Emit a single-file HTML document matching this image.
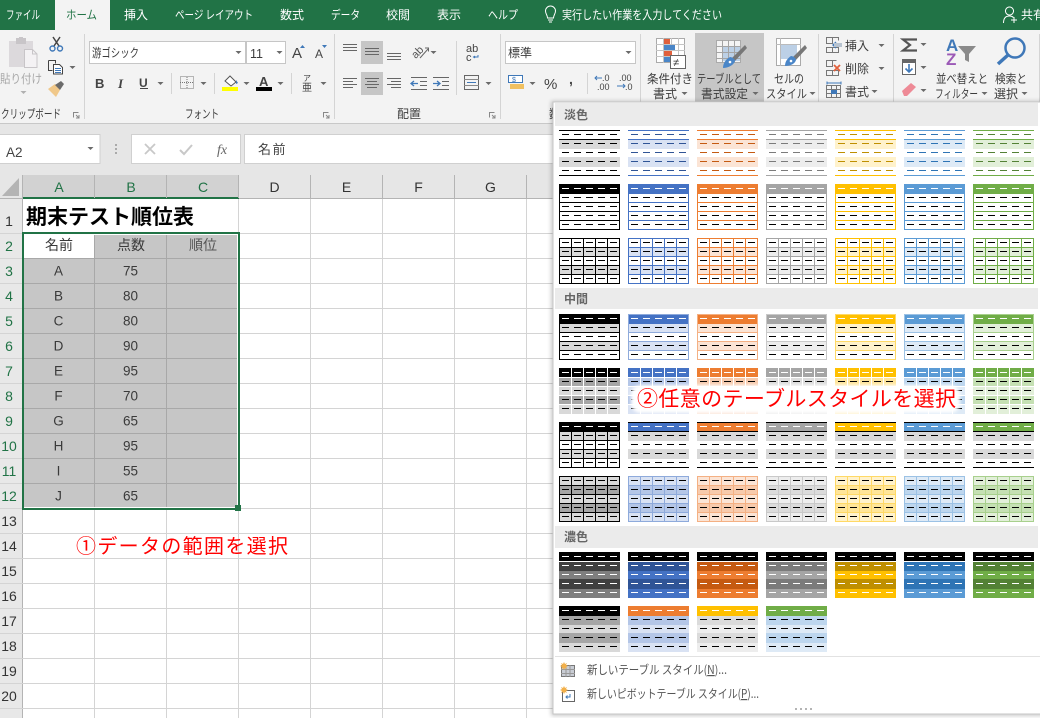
<!DOCTYPE html>
<html lang="ja"><head><meta charset="utf-8"><title>Excel</title>
<style>
html,body{margin:0;padding:0;background:#fff;width:1040px;height:718px;overflow:hidden}
svg{display:block;font-family:"Liberation Sans","Noto Sans CJK JP",sans-serif}
.j{font-family:"Noto Sans CJK JP","Liberation Sans",sans-serif}
.rb{font-size:12px;fill:#3c3c3c}
.tab{font-size:12px;fill:#fff}
.cell{font-size:13.500px;fill:#3a3a3a;text-anchor:middle;font-family:"Liberation Sans",sans-serif}
.cj{font-size:14px;fill:#3a3a3a;text-anchor:middle}
.hd{font-size:14px;text-anchor:middle;fill:#333}
.g{fill:#217346}
.sec{font-size:12px;font-weight:bold;fill:#666}
.crisp rect,.crisp path,.crisp use{shape-rendering:crispEdges}
.fa{fill:var(--a)}.ft{fill:var(--t)}.f2{fill:var(--t2)}.fd{fill:var(--d)}
.sa{fill:none;stroke:var(--a)}.sbb{fill:none;stroke:var(--b)}
.sw{stroke:#fff;fill:none}.sb{stroke:#000;fill:none}.sd{stroke:var(--d);fill:none}
.k{--a:#000;--t:#d9d9d9;--t2:#a6a6a6;--d:#000;--b:#000;--dk:#404040}
.c1{--a:#4472c4;--t:#d9e2f3;--t2:#b4c6e7;--d:#2f5496;--b:#8eaadb}
.c2{--a:#ed7d31;--t:#fbe4d5;--t2:#f7caac;--d:#c55a11;--b:#f4b083}
.c3{--a:#a5a5a5;--t:#ededed;--t2:#dbdbdb;--d:#7b7b7b;--b:#c9c9c9}
.c4{--a:#ffc000;--t:#fff2cc;--t2:#ffe599;--d:#bf8f00;--b:#ffd966}
.c5{--a:#5b9bd5;--t:#deeaf6;--t2:#bdd6ee;--d:#2e74b5;--b:#9cc2e5}
.c6{--a:#70ad47;--t:#e2efd9;--t2:#c5e0b3;--d:#538135;--b:#a8d08d}
.ic{fill:none;stroke:#666;stroke-width:1}
</style></head><body>
<svg width="1040" height="718" viewBox="0 0 1040 718" xmlns="http://www.w3.org/2000/svg">
<defs>
<path id="d0" d="M3 4.500h7m5 0h7m5 0h7m5 0h7m5 0h7"/>
<path id="dr" d="M3 13.500h7m5 0h7m5 0h7m5 0h7m5 0h7M3 22.500h7m5 0h7m5 0h7m5 0h7m5 0h7M3 31.500h7m5 0h7m5 0h7m5 0h7m5 0h7M3 40.500h7m5 0h7m5 0h7m5 0h7m5 0h7"/>
<path id="hl" d="M0 9.500h61M0 18.500h61M0 27.500h61M0 36.500h61"/>
<path id="vl" d="M12.500 0v46M24.500 0v46M36.500 0v46M48.500 0v46"/>
<path id="cr" d="M.5 0h6l-3 3z" fill="#6a6a6a"/>
<g id="l1"><rect width="61" height="1" class="fa"/><rect y="10" width="61" height="9" class="ft"/><rect y="27" width="61" height="10" class="ft"/><rect y="9" width="61" height="1" class="fa"/><rect y="45" width="61" height="1" class="fa"/><use href="#d0" class="sd"/><use href="#dr" class="sd"/></g>
<g id="l2"><rect width="61" height="10" class="fa"/><rect x=".5" y=".5" width="60" height="45" class="sa"/><path d="M0 18.500h61M0 27.500h61M0 36.500h61" class="sa"/><use href="#d0" class="sw"/><use href="#dr" class="sb"/></g>
<g id="l3"><rect y="9" width="61" height="9" class="ft"/><rect y="27" width="61" height="9" class="ft"/><use href="#hl" class="sa"/><use href="#vl" class="sa"/><rect x=".5" y=".5" width="60" height="45" class="sa"/><use href="#d0" class="sb"/><use href="#dr" class="sb"/></g>
<g id="m1"><rect y="10" width="61" height="9" class="ft"/><rect y="28" width="61" height="9" class="ft"/><rect width="61" height="10" class="fa"/><rect x=".5" y=".5" width="60" height="45" class="sbb"/><path d="M0 18.500h61M0 27.500h61M0 36.500h61" class="sbb"/><use href="#d0" class="sw"/><use href="#dr" class="sb"/></g>
<g id="m2"><rect width="61" height="9" class="fa"/><rect y="10" width="61" height="8" class="f2"/><rect y="19" width="61" height="8" class="ft"/><rect y="28" width="61" height="8" class="f2"/><rect y="37" width="61" height="9" class="ft"/><path d="M12.500 0v46M24.500 0v46M36.500 0v46M48.500 0v46" stroke="#fff" fill="none"/><use href="#d0" class="sw"/><use href="#dr" class="sb"/></g>
<g id="m3k"><rect y="10" width="61" height="9" class="ft"/><rect y="28" width="61" height="9" class="ft"/><path d="M12.500 10v36M24.500 10v36M36.500 10v36M48.500 10v36M0 18.500h61M0 27.500h61M0 36.500h61" stroke="#000" fill="none"/><rect width="61" height="10" fill="#000"/><rect x=".5" y=".5" width="60" height="45" stroke="#000" fill="none"/><use href="#d0" class="sw"/><use href="#dr" class="sb"/></g>
<g id="m3"><rect y="1" width="61" height="8" class="fa"/><rect width="61" height="1" fill="#000"/><rect y="9" width="61" height="1" fill="#000"/><rect y="10" width="61" height="9" fill="#d9d9d9"/><rect y="27" width="61" height="10" fill="#d9d9d9"/><rect y="45" width="61" height="1" fill="#000"/><use href="#d0" class="sw"/><use href="#dr" class="sb"/></g>
<g id="m4"><rect width="61" height="46" class="ft"/><rect y="9" width="61" height="9" class="f2"/><rect y="27" width="61" height="9" class="f2"/><use href="#hl" class="sbb"/><use href="#vl" class="sbb"/><rect x=".5" y=".5" width="60" height="45" class="sbb"/><use href="#d0" class="sb"/><use href="#dr" class="sb"/></g>
<g id="d1"><rect width="61" height="9" fill="#000"/><rect y="10" width="61" height="9" class="fd"/><rect y="19" width="61" height="8" class="fa"/><rect y="27" width="61" height="10" class="fd"/><rect y="37" width="61" height="9" class="fa"/><use href="#d0" class="sw"/><use href="#dr" class="sw"/></g>
<g id="d2"><rect width="61" height="10" class="fa"/><rect y="10" width="61" height="9" class="f2"/><rect y="19" width="61" height="8" class="ft"/><rect y="27" width="61" height="10" class="f2"/><rect y="37" width="61" height="9" class="ft"/><use href="#d0" class="sw"/><use href="#dr" class="sb"/></g>
<filter id="bl" x="-5%" y="-30%" width="110%" height="160%"><feGaussianBlur stdDeviation="1.600"/></filter>
<filter id="sh" x="-3%" y="-3%" width="106%" height="106%"><feGaussianBlur stdDeviation="2"/></filter>
</defs>

<!-- title bar -->
<g class="crisp"><rect width="1040" height="30" fill="#217346"/><rect x="55" width="55" height="30" fill="#f3f3f3"/><rect y="30" width="1040" height="93" fill="#f3f3f3"/><rect y="123" width="1040" height="1" fill="#c8c8c8"/><rect y="124" width="1040" height="51" fill="#e6e6e6"/></g>
<g class="j">
<text class="tab" x="6" y="19" textLength="34" lengthAdjust="spacingAndGlyphs">ファイル</text>
<text class="tab" x="66" y="19" textLength="31" lengthAdjust="spacingAndGlyphs" style="fill:#217346">ホーム</text>
<text class="tab" x="124" y="19" textLength="24" lengthAdjust="spacingAndGlyphs">挿入</text>
<text class="tab" x="175" y="19" textLength="78" lengthAdjust="spacingAndGlyphs">ページ レイアウト</text>
<text class="tab" x="280" y="19" textLength="24" lengthAdjust="spacingAndGlyphs">数式</text>
<text class="tab" x="331" y="19" textLength="29" lengthAdjust="spacingAndGlyphs">データ</text>
<text class="tab" x="386" y="19" textLength="24" lengthAdjust="spacingAndGlyphs">校閲</text>
<text class="tab" x="437" y="19" textLength="24" lengthAdjust="spacingAndGlyphs">表示</text>
<text class="tab" x="488" y="19" textLength="30" lengthAdjust="spacingAndGlyphs">ヘルプ</text>
<text class="tab" x="562" y="19" textLength="160" lengthAdjust="spacingAndGlyphs">実行したい作業を入力してください</text>
<text class="tab" x="1021" y="19">共有</text>
</g>
<path d="M547.500 18c0-3-2-4-2-7a5 5 0 0 1 10 0c0 3-2 4-2 7zM548 20h5M549 22h3" fill="none" stroke="#fff"/>
<path d="M1009.500 7a4 4 0 1 1-.01 0zM1003.500 23c0-5 2-7 6-7 2 0 3 .5 4 1.500M1011 20h6M1014 17v6" fill="none" stroke="#fff"/>

<!-- clipboard -->
<g class="crisp">
<rect x="9" y="41" width="24" height="26" fill="#dcd9dc"/><rect x="16" y="38" width="10" height="6" fill="#c8c5c8"/><rect x="19" y="37" width="4" height="2" fill="#c8c5c8"/>
</g>
<path d="M24.500 49.500h8l4.500 4.500v13.500h-12.500z" fill="#f4f2f4" stroke="#c8c5c8"/><path d="M32.500 49.500v4.500h4.500" fill="none" stroke="#c8c5c8"/>
<g class="j"><text class="rb" x="0" y="83" textLength="42" lengthAdjust="spacingAndGlyphs" style="fill:#a8a8a8">貼り付け</text></g>
<path d="M20.500 91h6l-3 3z" fill="#b0b0b0"/>
<path d="M53 37l6 9M60 37l-6 9" stroke="#444" stroke-width="1.500" fill="none"/>
<circle cx="52.500" cy="48.500" r="2.500" fill="none" stroke="#3f78b8" stroke-width="1.400"/><circle cx="60" cy="48.500" r="2.500" fill="none" stroke="#3f78b8" stroke-width="1.400"/>
<path d="M48.500 60.500h7v3M48.500 60.500v10h4" fill="none" stroke="#444"/><path d="M53.500 64.500h6l3 3v6.500h-9z" fill="#fff" stroke="#444"/><path d="M55 68.500h6M55 70.500h6M55 72.500h6" stroke="#3f78b8"/>
<use href="#cr" x="69" y="66"/>
<path d="M48 89l7-5 5 6-4 7z" fill="#f0c88a"/><path d="M55 85l6-4 3 3-4 6z" fill="#6b6b6b"/>
<g class="j"><text class="rb" x="1" y="118" textLength="60" lengthAdjust="spacingAndGlyphs">クリップボード</text></g>
<path d="M73.500 117.500v-5h5M76 115l3 3M79 115v3h-3" fill="none" stroke="#888"/>
<g class="crisp"><rect x="84" y="34" width="1" height="85" fill="#d4d4d4"/></g>

<!-- font -->
<g class="crisp"><rect x="89.500" y="41.500" width="156" height="22" fill="#fff" stroke="#c6c6c6"/><rect x="246.500" y="41.500" width="39" height="22" fill="#fff" stroke="#c6c6c6"/></g>
<g class="j"><text class="rb" x="92" y="57" textLength="47" lengthAdjust="spacingAndGlyphs">游ゴシック</text></g>
<text class="rb" x="250" y="58" style="font-size:12.500px">11</text>
<use href="#cr" x="235" y="51"/><use href="#cr" x="276" y="51"/>
<text x="292" y="58" style="font-size:15px;fill:#444">A</text><path d="M300 48l2.500-3 2.500 3z" fill="#3f78b8"/>
<text x="315" y="58" style="font-size:12px;fill:#444">A</text><path d="M322 45h5l-2.500 3z" fill="#3f78b8"/>
<text x="95" y="88" style="font-size:13px;font-weight:bold;fill:#444">B</text>
<text x="118" y="88" style="font-size:13px;font-style:italic;font-weight:bold;font-family:'Liberation Serif',serif;fill:#444">I</text>
<text x="139" y="87" style="font-size:12px;font-weight:bold;fill:#444">U</text><rect x="140" y="88" width="8" height="1" fill="#444"/>
<use href="#cr" x="157" y="82"/>
<g class="crisp"><rect x="171" y="73" width="1" height="21" fill="#d4d4d4"/></g>
<rect x="180.500" y="76.500" width="13" height="12" fill="none" stroke="#777" stroke-dasharray="1 1"/><path d="M187 77v12M180 82.500h14" stroke="#777" stroke-dasharray="1 1"/>
<use href="#cr" x="200" y="82"/>
<g class="crisp"><rect x="214" y="73" width="1" height="21" fill="#d4d4d4"/></g>
<path d="M225 81l5-5 6 6-5 4z" fill="#fff" stroke="#555"/><path d="M236 80l2 3-2 1z" fill="#3f78b8"/>
<g class="crisp"><rect x="222" y="87" width="16" height="4" fill="#ff0"/></g>
<use href="#cr" x="243" y="82"/>
<text x="259" y="86" style="font-size:13px;font-weight:bold;fill:#444">A</text>
<g class="crisp"><rect x="256" y="87" width="16" height="4" fill="#000"/></g>
<use href="#cr" x="277" y="82"/>
<g class="crisp"><rect x="291" y="73" width="1" height="21" fill="#d4d4d4"/></g>
<g class="j"><text x="303" y="81" style="font-size:8px;fill:#444">ア</text><text x="302" y="91" style="font-size:10px;fill:#444">亜</text></g>
<use href="#cr" x="320" y="82"/>
<g class="j"><text class="rb" x="185" y="118" textLength="34" lengthAdjust="spacingAndGlyphs">フォント</text></g>
<path d="M323.500 117.500v-5h5M326 115l3 3M329 115v3h-3" fill="none" stroke="#888"/>
<g class="crisp"><rect x="334" y="34" width="1" height="85" fill="#d4d4d4"/></g>

<!-- alignment -->
<g class="crisp"><rect x="361" y="41" width="22" height="23" fill="#c6c6c6"/><rect x="361" y="72" width="22" height="23" fill="#c6c6c6"/></g>
<g class="ic" style="shape-rendering:crispEdges">
<path d="M343 44.500h14M343 47.500h14M343 50.500h14"/><path d="M365 48.500h14M365 51.500h14M365 54.500h14"/><path d="M387 53.500h14M387 56.500h14M387 59.500h14"/>
<path d="M343 78.500h14M343 81.500h10M343 84.500h14M343 87.500h10"/><path d="M365 78.500h14M367 81.500h10M365 84.500h14M367 87.500h10"/><path d="M387 78.500h14M391 81.500h10M387 84.500h14M391 87.500h10"/>
<path d="M411 77.500h16M420 81.500h7M420 85.500h7M411 89.500h16"/><path d="M433 77.500h16M442 81.500h7M442 85.500h7M433 89.500h16"/>
</g>
<path d="M411 83.500h7M414 81l-3 2.500 3 2.500M433 83.500h7M437 81l3 2.500-3 2.500" fill="none" stroke="#3f78b8" stroke-width="1.300"/>
<text x="411" y="56" transform="rotate(-45 417 52)" style="font-size:11px;fill:#555">ab</text><path d="M420 58l8-9M425 48h3.500v3.500" fill="none" stroke="#666"/>
<use href="#cr" x="430" y="51"/>
<g class="crisp"><rect x="456" y="41" width="1" height="54" fill="#d4d4d4"/></g>
<text x="466" y="52" style="font-size:11px;fill:#444">ab</text><text x="466" y="61" style="font-size:11px;fill:#444">c</text><path d="M478 55v2h-4M475 56l-1.500 1 1.500 1" fill="none" stroke="#3f78b8"/>
<rect x="464.500" y="75.500" width="14" height="14" fill="none" stroke="#666"/><path d="M464 79.500h15M464 85.500h15" stroke="#888"/><path d="M467 82.500h9" stroke="#3f78b8"/>
<use href="#cr" x="485" y="82"/>
<g class="j"><text class="rb" x="397" y="118">配置</text></g>
<path d="M489.500 117.500v-5h5M492 115l3 3M495 115v3h-3" fill="none" stroke="#888"/>
<g class="crisp"><rect x="500" y="34" width="1" height="85" fill="#d4d4d4"/></g>

<!-- number -->
<g class="crisp"><rect x="505.500" y="41.500" width="130" height="22" fill="#fff" stroke="#c6c6c6"/></g>
<g class="j"><text class="rb" x="508" y="57">標準</text></g>
<use href="#cr" x="625" y="51"/>
<rect x="508.500" y="75.500" width="14" height="7" fill="#fff" stroke="#3f78b8"/><path d="M510 84h14v5h-14z" fill="#f0c060"/><text x="512" y="82" style="font-size:7px;fill:#3f78b8">$</text>
<use href="#cr" x="529" y="82"/>
<text x="544" y="89" style="font-size:15px;fill:#444">%</text>
<text x="569" y="84" style="font-size:14px;font-weight:bold;fill:#444">,</text>
<g class="crisp"><rect x="587" y="73" width="1" height="21" fill="#d4d4d4"/></g>
<text x="602" y="81" style="font-size:9px;fill:#444">.0</text><text x="597" y="90" style="font-size:9px;fill:#444">.00</text><path d="M602 78h-7M597 76l-2 2 2 2" stroke="#3f78b8" fill="none"/>
<text x="619" y="81" style="font-size:9px;fill:#444">.00</text><text x="625" y="90" style="font-size:9px;fill:#444">.0</text><path d="M617 86h8M623 84l2 2-2 2" stroke="#3f78b8" fill="none"/>
<g class="j"><text class="rb" x="549" y="118">数値</text></g>
<g class="crisp"><rect x="640" y="34" width="1" height="85" fill="#d4d4d4"/></g>

<!-- styles -->
<g class="crisp">
<rect x="695" y="33" width="69" height="70" fill="#c6c6c6"/>
<!-- cond fmt -->
<rect x="656.500" y="38.500" width="28" height="24" fill="#fff" stroke="#aaa"/>
<path d="M663.500 38v25M671.500 38v25M678.500 38v25M656 44.500h29M656 50.500h29M656 56.500h29" stroke="#c4c4c4"/>
<rect x="664" y="39" width="6" height="5" fill="#e0603c"/><rect x="664" y="45" width="11" height="5" fill="#4a86c8"/><rect x="664" y="51" width="8" height="5" fill="#e0603c"/><rect x="664" y="57" width="6" height="5" fill="#4a86c8"/>
<rect x="670.500" y="55.500" width="15" height="13" fill="#fff" stroke="#666"/>
<!-- table -->
<rect x="716.500" y="40.500" width="24" height="22" fill="#f4f4f4" stroke="#aaa"/>
<rect x="722" y="46" width="18" height="15" fill="#bcd0e6"/>
<path d="M722.500 40v23M728.500 40v23M734.500 40v23M716 46.500h25M716 52.500h25M716 58.500h25" stroke="#a4a4a4"/>
<!-- cell style -->
<rect x="776.500" y="38.500" width="24" height="27" fill="#fff" stroke="#aaa"/>
<rect x="781" y="45" width="16" height="14" fill="#bcd0e6"/>
<path d="M780.500 38v28M776 44.500h25" stroke="#bbb"/>
</g>
<text x="673" y="66" style="font-size:11px;fill:#333">≠</text>
<path d="M745 45l2 3-12 13-3-3z" fill="#777"/><path d="M723 68c0-5 3-9 7-11 2 0 5 2 5 4-1 4-7 7-12 7z" fill="#4a86c8"/><circle cx="730" cy="62" r="1.300" fill="#fff"/>
<path d="M805 45l2 3-12 13-3-3z" fill="#777"/><path d="M785 66c0-5 3-8 6-10 2 0 5 2 5 4-1 4-6 6-11 6z" fill="#4a86c8"/><circle cx="791" cy="61" r="1.300" fill="#fff"/>
<g class="j">
<text class="rb" x="647" y="83" textLength="46" lengthAdjust="spacingAndGlyphs">条件付き</text>
<text class="rb" x="653" y="98" textLength="24">書式</text>
<text class="rb" x="697" y="83" textLength="64" lengthAdjust="spacingAndGlyphs">テーブルとして</text>
<text class="rb" x="701" y="98" textLength="47" lengthAdjust="spacingAndGlyphs">書式設定</text>
<text class="rb" x="774" y="83" textLength="30" lengthAdjust="spacingAndGlyphs">セルの</text>
<text class="rb" x="766" y="98" textLength="41" lengthAdjust="spacingAndGlyphs">スタイル</text>
</g>
<use href="#cr" x="681" y="92"/><use href="#cr" x="752" y="92"/><use href="#cr" x="809" y="92"/>
<g class="crisp"><rect x="818" y="34" width="1" height="68" fill="#d4d4d4"/></g>

<!-- cells -->
<g fill="none" stroke="#777" style="shape-rendering:crispEdges">
<path d="M826.500 37.500h6v6h-6zM826.500 47.500h6v5h-6zM832.500 47.500h6v5h-6zM832.500 37.500h6v3"/>
<path d="M826.500 60.500h6v6h-6zM826.500 70.500h6v5h-6zM832.500 70.500h6v5h-6zM832.500 60.500h4"/>
<rect x="826.500" y="85.500" width="14" height="12"/><path d="M826 89.500h15M826 93.500h15M831.500 85v13M836.500 85v13"/>
</g>
<path d="M841 45h-8M836 42l-3 3 3 3" fill="none" stroke="#3f78b8" stroke-width="1.300"/><rect x="834" y="43" width="8" height="4" fill="#b7c3d0"/>
<path d="M834 65l6 6M840 65l-6 6" stroke="#e2603c" stroke-width="1.800"/>
<rect x="831" y="90" width="6" height="4" fill="#3f78b8"/><path d="M827 83h14M827 81.500v3M841 81.500v3" stroke="#3f78b8" fill="none"/>
<g class="j">
<text class="rb" x="845" y="50">挿入</text><text class="rb" x="845" y="73">削除</text><text class="rb" x="845" y="96">書式</text>
</g>
<use href="#cr" x="878" y="44"/><use href="#cr" x="878" y="67"/><use href="#cr" x="871" y="90"/>
<g class="crisp"><rect x="893" y="34" width="1" height="68" fill="#d4d4d4"/></g>

<!-- editing -->
<path d="M917 39.500h-14l7 5.500-7 5.500h14" fill="none" stroke="#555" stroke-width="2.200"/>
<use href="#cr" x="920" y="43"/>
<rect x="902.500" y="59.500" width="13" height="15" fill="#fff" stroke="#666"/><rect x="902" y="59" width="14" height="4" fill="#666"/><path d="M909 64v8M905.500 68.500l3.500 3.500 3.500-3.500" stroke="#3f78b8" stroke-width="1.600" fill="none"/>
<use href="#cr" x="920" y="66"/>
<path d="M902 91l9-8 5 4-9 9h-3z" fill="#ee8a96"/>
<use href="#cr" x="920" y="89"/>
<text x="946" y="51" style="font-size:17px;font-weight:bold;fill:#3f78b8">A</text>
<text x="946" y="65" style="font-size:17px;font-weight:bold;fill:#9b59b6">Z</text>
<path d="M958 46h18l-7 8v8l-4-2v-6z" fill="#8a8a8a"/>
<g class="j">
<text class="rb" x="936" y="83" textLength="52" lengthAdjust="spacingAndGlyphs">並べ替えと</text>
<text class="rb" x="935" y="98" textLength="43" lengthAdjust="spacingAndGlyphs">フィルター</text>
<text class="rb" x="995" y="83" textLength="32" lengthAdjust="spacingAndGlyphs">検索と</text>
<text class="rb" x="994" y="98" textLength="24">選択</text>
</g>
<use href="#cr" x="981" y="92"/><use href="#cr" x="1021" y="92"/>
<circle cx="1015" cy="48" r="9.500" fill="none" stroke="#3f78b8" stroke-width="2.500"/><path d="M1008 55l-10 9" stroke="#3f78b8" stroke-width="3.500"/>
<g class="crisp"><rect x="1039" y="34" width="1" height="68" fill="#d4d4d4"/></g>

<!-- formula bar -->
<g class="crisp">
<rect x="-1" y="134.500" width="101" height="29" fill="#fff" stroke="#d0d0d0"/>
<rect x="131.500" y="134.500" width="109" height="29" fill="#fff" stroke="#d0d0d0"/>
<rect x="244.500" y="134.500" width="800" height="29" fill="#fff" stroke="#d0d0d0"/>
<rect x="115" y="144" width="2" height="2" fill="#aaa"/><rect x="115" y="148" width="2" height="2" fill="#aaa"/><rect x="115" y="152" width="2" height="2" fill="#aaa"/>
</g>
<text x="6" y="157" style="font-size:13.500px;fill:#444">A2</text>
<use href="#cr" x="87" y="147"/>
<path d="M145 144l10 10M155 144l-10 10" stroke="#c8c8c8" stroke-width="1.800"/>
<path d="M180 150l4 4 8-9" stroke="#c8c8c8" stroke-width="2" fill="none"/>
<text x="217" y="154" style="font-size:14px;font-style:italic;font-family:'Liberation Serif',serif;fill:#666">fx</text>
<g class="j"><text x="258" y="154" style="font-size:13px;fill:#444;letter-spacing:1.500px">名前</text></g>

<!-- headers -->
<g class="crisp">
<rect x="0" y="175" width="1040" height="24" fill="#e6e6e6"/>
<rect x="22" y="175" width="217" height="24" fill="#d2d2d2"/>
<rect x="0" y="198" width="1040" height="1" fill="#b4b4b4"/>
<rect x="22" y="197" width="217" height="2" fill="#217346"/>
<rect x="0" y="199" width="22" height="519" fill="#e8e8e8"/>
<rect x="22" y="199" width="1018" height="519" fill="#fff"/>
<path d="M22.500 175v24M94.500 175v23M166.500 175v23M238.500 175v23M310.500 175v23M382.500 175v23M454.500 175v23M526.500 175v23" stroke="#b4b4b4"/>
<path d="M22.500 199v519" stroke="#b4b4b4"/>
<path d="M94.500 199v519M166.500 199v519M238.500 199v519M310.500 199v519M382.500 199v519M454.500 199v519M526.500 199v519M0 233.500h1040M0 258.500h1040M0 283.500h1040M0 308.500h1040M0 333.500h1040M0 358.500h1040M0 383.500h1040M0 408.500h1040M0 433.500h1040M0 458.500h1040M0 483.500h1040M0 508.500h1040M0 533.500h1040M0 558.500h1040M0 583.500h1040M0 608.500h1040M0 633.500h1040M0 658.500h1040M0 683.500h1040M0 708.500h1040" stroke="#d4d4d4"/>
<!-- title row merged look -->
<rect x="23" y="199" width="215" height="34" fill="#fff"/>
<!-- selection -->
<rect x="24" y="234" width="214" height="274" fill="#c6c6c6"/>
<rect x="24" y="234" width="70" height="24" fill="#fff"/>
<path d="M94.500 234v274M166.500 234v274M24 258.500h214M24 283.500h214M24 308.500h214M24 333.500h214M24 358.500h214M24 383.500h214M24 408.500h214M24 433.500h214M24 458.500h214M24 483.500h214" stroke="#a8a8a8"/>
<rect x="24" y="234" width="214" height="1" fill="#fff"/><rect x="237" y="234" width="1" height="274" fill="#fff"/><rect x="24" y="507" width="214" height="1" fill="#fff"/>
<rect x="22" y="232" width="218" height="2" fill="#217346"/><rect x="22" y="508" width="218" height="2" fill="#217346"/><rect x="22" y="232" width="2" height="278" fill="#217346"/><rect x="238" y="232" width="2" height="278" fill="#217346"/>
<rect x="235" y="505" width="6" height="6" fill="#217346"/>
</g>
<path d="M2 196L19 178V196Z" fill="#b4b4b4"/>
<g class="hd">
<text class="hd g" x="59" y="192">A</text><text class="hd g" x="131" y="192">B</text><text class="hd g" x="203" y="192">C</text>
<text class="hd" x="274.500" y="192">D</text><text class="hd" x="346.500" y="192">E</text><text class="hd" x="418.500" y="192">F</text><text class="hd" x="490.500" y="192">G</text>
<text class="hd" x="9" y="226">1</text>
<text class="hd g" x="9" y="251">2</text><text class="hd g" x="9" y="276">3</text><text class="hd g" x="9" y="301">4</text><text class="hd g" x="9" y="326">5</text><text class="hd g" x="9" y="351">6</text><text class="hd g" x="9" y="376">7</text><text class="hd g" x="9" y="401">8</text><text class="hd g" x="9" y="426">9</text><text class="hd g" x="9" y="451">10</text><text class="hd g" x="9" y="476">11</text><text class="hd g" x="9" y="501">12</text>
<text class="hd" x="9" y="526">13</text><text class="hd" x="9" y="551">14</text><text class="hd" x="9" y="576">15</text><text class="hd" x="9" y="601">16</text><text class="hd" x="9" y="626">17</text><text class="hd" x="9" y="651">18</text><text class="hd" x="9" y="676">19</text><text class="hd" x="9" y="701">20</text>
</g>
<g class="j">
<text x="26" y="224" style="font-size:21px;font-weight:bold;fill:#000">期末テスト順位表</text>
<text class="cj" x="59" y="250">名前</text><text class="cj" x="131" y="250">点数</text><text class="cj" x="203" y="250" style="fill:#555">順位</text>
</g>
<text class="cell" x="58.500" y="275.500">A</text><text class="cell" x="130.500" y="275.500">75</text>
<text class="cell" x="58.500" y="300.500">B</text><text class="cell" x="130.500" y="300.500">80</text>
<text class="cell" x="58.500" y="325.500">C</text><text class="cell" x="130.500" y="325.500">80</text>
<text class="cell" x="58.500" y="350.500">D</text><text class="cell" x="130.500" y="350.500">90</text>
<text class="cell" x="58.500" y="375.500">E</text><text class="cell" x="130.500" y="375.500">95</text>
<text class="cell" x="58.500" y="400.500">F</text><text class="cell" x="130.500" y="400.500">70</text>
<text class="cell" x="58.500" y="425.500">G</text><text class="cell" x="130.500" y="425.500">65</text>
<text class="cell" x="58.500" y="450.500">H</text><text class="cell" x="130.500" y="450.500">95</text>
<text class="cell" x="58.500" y="475.500">I</text><text class="cell" x="130.500" y="475.500">55</text>
<text class="cell" x="58.500" y="500.500">J</text><text class="cell" x="130.500" y="500.500">65</text>
<g class="j"><text x="76" y="553" textLength="212" style="font-size:20px;fill:#ff0000">①データの範囲を選択</text></g>

<!-- gallery panel -->
<rect x="551" y="101" width="495" height="615" fill="#000" opacity=".2" filter="url(#sh)"/>
<g class="crisp">
<rect x="553" y="102" width="490" height="612" fill="#fff" stroke="#c6c6c6"/>
<rect x="555" y="103" width="483" height="23" fill="#ebebeb"/>
<rect x="555" y="288" width="483" height="21" fill="#ebebeb"/>
<rect x="555" y="526" width="483" height="22" fill="#ebebeb"/>
<rect x="555" y="656" width="485" height="1" fill="#e2e2e2"/>
</g>
<g class="j">
<text class="sec" x="564" y="119">淡色</text>
<text class="sec" x="564" y="303">中間</text>
<text class="sec" x="564" y="541">濃色</text>
</g>
<g class="crisp" stroke-width="1">
<!-- light row 1 -->
<use href="#l1" class="k" x="559" y="130"/><use href="#l1" class="c1" x="628" y="130"/><use href="#l1" class="c2" x="697" y="130"/><use href="#l1" class="c3" x="766" y="130"/><use href="#l1" class="c4" x="835" y="130"/><use href="#l1" class="c5" x="904" y="130"/><use href="#l1" class="c6" x="973" y="130"/>
<!-- light row 2 -->
<use href="#l2" class="k" x="559" y="184"/><use href="#l2" class="c1" x="628" y="184"/><use href="#l2" class="c2" x="697" y="184"/><use href="#l2" class="c3" x="766" y="184"/><use href="#l2" class="c4" x="835" y="184"/><use href="#l2" class="c5" x="904" y="184"/><use href="#l2" class="c6" x="973" y="184"/>
<!-- light row 3 -->
<use href="#l3" class="k" x="559" y="238"/><use href="#l3" class="c1" x="628" y="238"/><use href="#l3" class="c2" x="697" y="238"/><use href="#l3" class="c3" x="766" y="238"/><use href="#l3" class="c4" x="835" y="238"/><use href="#l3" class="c5" x="904" y="238"/><use href="#l3" class="c6" x="973" y="238"/>
<!-- medium row 1 -->
<use href="#m1" class="k" x="559" y="314"/><use href="#m1" class="c1" x="628" y="314"/><use href="#m1" class="c2" x="697" y="314"/><use href="#m1" class="c3" x="766" y="314"/><use href="#m1" class="c4" x="835" y="314"/><use href="#m1" class="c5" x="904" y="314"/><use href="#m1" class="c6" x="973" y="314"/>
<!-- medium row 2 -->
<use href="#m2" class="k" x="559" y="368"/><use href="#m2" class="c1" x="628" y="368"/><use href="#m2" class="c2" x="697" y="368"/><use href="#m2" class="c3" x="766" y="368"/><use href="#m2" class="c4" x="835" y="368"/><use href="#m2" class="c5" x="904" y="368"/><use href="#m2" class="c6" x="973" y="368"/>
<!-- medium row 3 -->
<use href="#m3k" class="k" x="559" y="422"/><use href="#m3" class="c1" x="628" y="422"/><use href="#m3" class="c2" x="697" y="422"/><use href="#m3" class="c3" x="766" y="422"/><use href="#m3" class="c4" x="835" y="422"/><use href="#m3" class="c5" x="904" y="422"/><use href="#m3" class="c6" x="973" y="422"/>
<!-- medium row 4 -->
<use href="#m4" class="k" x="559" y="476"/><use href="#m4" class="c1" x="628" y="476"/><use href="#m4" class="c2" x="697" y="476"/><use href="#m4" class="c3" x="766" y="476"/><use href="#m4" class="c4" x="835" y="476"/><use href="#m4" class="c5" x="904" y="476"/><use href="#m4" class="c6" x="973" y="476"/>
<!-- dark row 1 -->
<use href="#d1" style="--d:#404040;--a:#7f7f7f" x="559" y="552"/><use href="#d1" class="c1" x="628" y="552"/><use href="#d1" class="c2" x="697" y="552"/><use href="#d1" class="c3" x="766" y="552"/><use href="#d1" class="c4" x="835" y="552"/><use href="#d1" class="c5" x="904" y="552"/><use href="#d1" class="c6" x="973" y="552"/>
<!-- dark row 2 -->
<use href="#d2" class="k" x="559" y="606"/>
<use href="#d2" style="--a:#ed7d31;--t:#d9e2f3;--t2:#b4c6e7" x="628" y="606"/>
<use href="#d2" style="--a:#ffc000;--t:#ededed;--t2:#dbdbdb" x="697" y="606"/>
<use href="#d2" style="--a:#70ad47;--t:#deeaf6;--t2:#bdd6ee" x="766" y="606"/>
</g>

<!-- footer -->
<g class="crisp">
<rect x="561.500" y="665.500" width="13" height="11" fill="#c8ccd4" stroke="#777"/>
<path d="M566 665v12M570 665v12M561 669.500h14M561 673.500h14" stroke="#999"/>
<rect x="562.500" y="690.500" width="12" height="11" fill="#fff" stroke="#666"/>
</g>
<path d="M563 663l2-1-1-2 2 1 1-2 1 2 2-1-1 2 2 1-2 1 1 2-2-1-1 2-1-2-2 1 1-2z" fill="#f2b04a" transform="translate(-3 3)"/>
<path d="M563 663l2-1-1-2 2 1 1-2 1 2 2-1-1 2 2 1-2 1 1 2-2-1-1 2-1-2-2 1 1-2z" fill="#f2b04a" transform="translate(-3 27)"/>
<path d="M570 694v3h-4M567.500 695.500l-1.500 1.500 1.500 1.500" fill="none" stroke="#3f78b8"/>
<g class="j">
<text x="587" y="674" textLength="140" lengthAdjust="spacingAndGlyphs" style="font-size:12px;fill:#555">新しいテーブル スタイル(<tspan text-decoration="underline">N</tspan>)...</text>
<text x="587" y="698" textLength="172" lengthAdjust="spacingAndGlyphs" style="font-size:12px;fill:#555">新しいピボットテーブル スタイル(<tspan text-decoration="underline">P</tspan>)...</text>
</g>
<g class="crisp" fill="#b4b4b4"><rect x="795" y="708" width="2" height="2"/><rect x="800" y="708" width="2" height="2"/><rect x="805" y="708" width="2" height="2"/><rect x="810" y="708" width="2" height="2"/></g>

<!-- annotation 2 -->
<rect x="631" y="385" width="329" height="28" rx="10" fill="#fff" filter="url(#bl)"/>
<g class="j"><text x="637" y="406" textLength="319" style="font-size:21px;fill:#ff0000">②任意のテーブルスタイルを選択</text></g>
</svg>
</body></html>
